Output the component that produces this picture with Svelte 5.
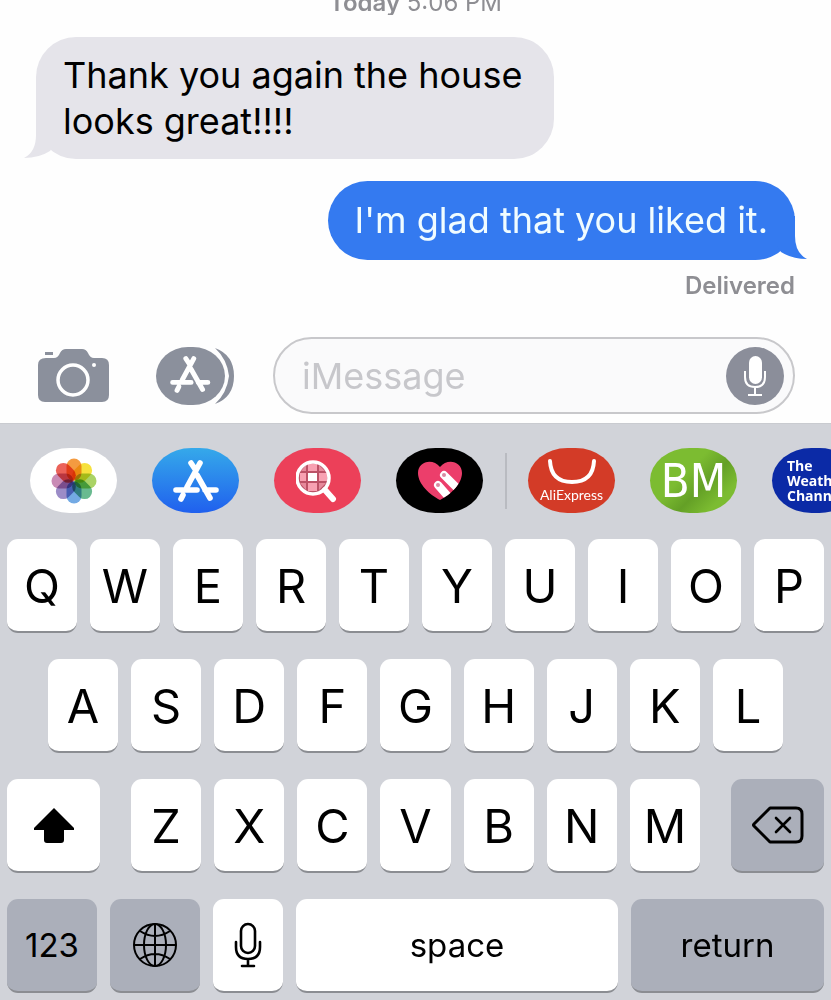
<script>
  const topRow = 'QWERTYUIOP'.split('');
  const middleRow = 'ASDFGHJKL'.split('');
  const bottomRow = 'ZXCVBNM'.split('');

  // Photos pinwheel, clockwise from the top
  const petals = ['#f28a1e', '#f5dc1c', '#9bcb4b', '#4fae7c', '#5a9be0', '#8a78bd', '#c077a8', '#e8463c'];

  const heart = 'M24 40C14 35 2 24 2 13C2 1 17-2 24 7C31-2 46 1 46 13C46 24 34 35 24 40Z';

  let draft = $state('');
</script>

{#snippet storeGlyph()}
  <g fill="none" stroke="#fff" stroke-linecap="round" stroke-width="5.6">
    <path d="M18 3 22 9M27 3 14 27M24 15 37 38M3 30H24M32 30H43M10 35 8 39" />
  </g>
{/snippet}

{#snippet key(letter)}
  <button class="key">{letter}</button>
{/snippet}

<main class="messages">
  <section class="thread">
    <div class="stamp"><span><b>Today</b> 5:06 PM</span></div>

    <p class="bubble received">
      Thank you again the house looks great!!!!
      <svg class="tail" viewBox="0 0 30 44" aria-hidden="true">
        <path d="M12 0V20Q12 37 0 43Q15 43 26 36L30 30V0Z" fill="#e5e4ea" />
      </svg>
    </p>

    <p class="bubble sent">
      <span>I'm glad that you liked it.</span>
      <svg class="tail" viewBox="0 0 30 44" aria-hidden="true">
        <path d="M18 0V20Q18 37 30 43Q15 43 4 36L0 30V0Z" fill="#347af0" />
      </svg>
    </p>
    <div class="status">Delivered</div>
  </section>

  <form class="compose" onsubmit={(e) => e.preventDefault()}>
    <button class="tool camera" type="button" aria-label="Camera">
      <svg width="72" height="56" viewBox="0 0 72 56">
        <path d="M8 10H16Q20 10 22 5Q24 1 28 1H44Q48 1 50 5Q52 10 56 10H64Q71 10 71 17V47Q71 54 64 54H7Q0 54 0 47V17Q0 10 8 10Z" fill="#8b909c" />
        <rect x="7" y="4" width="8" height="3" fill="#8b909c" />
        <circle cx="35" cy="32" r="15" fill="none" stroke="#fff" stroke-width="3.5" />
        <circle cx="56" cy="17" r="2" fill="#fff" />
      </svg>
    </button>
    <button class="tool store" type="button" aria-label="Apps">
      <svg width="78" height="58" viewBox="0 0 78 58">
        <path d="M59 1Q78 8 78 29T59 57Q71 46 73 29Q71 12 59 1Z" fill="#8b909c" />
        <rect width="69" height="58" rx="32" ry="29" fill="#8b909c" />
        <g transform="translate(14 9) scale(.88)">{@render storeGlyph()}</g>
      </svg>
    </button>
    <div class="field">
      <input type="text" placeholder="iMessage" aria-label="iMessage" bind:value={draft} />
      <button class="mic" type="button" aria-label="Record audio">
        <svg width="58" height="58" viewBox="0 0 58 58">
          <circle cx="29" cy="29" r="29" fill="#8b8e9a" />
          <rect x="23" y="9" width="13" height="28" rx="6.5" fill="#fff" />
          <path d="M19 24V30Q19 40 29 40T39 30V24M29 40V48M22 48H36" fill="none" stroke="#fff" stroke-width="2" />
        </svg>
      </button>
    </div>
  </form>

  <section class="keyboard">
    <nav class="apps" aria-label="iMessage apps">
      <button class="app photos" aria-label="Photos">
        <svg width="46" height="46" viewBox="-23 -23 46 46">
          {#each petals as color, i}
            <rect class="petal" x="-7.5" y="-22.5" width="15" height="22" rx="7.5" fill={color} transform="rotate({i * 45})" />
          {/each}
        </svg>
      </button>
      <button class="app appstore" aria-label="App Store">
        <svg width="46" height="42" viewBox="0 0 46 42">{@render storeGlyph()}</svg>
      </button>
      <button class="app images" aria-label="#images">
        <svg width="44" height="44" viewBox="2 0 44 44">
          <circle cx="19" cy="19" r="16" fill="#bc5267" />
          <g fill="#f8a1b2">
            <path d="M14 5H23V12H14ZM6 14H12V22H6ZM25 14H33V22H25ZM14 24H23V32H14Z" />
            <path d="M14 14H23V22H14Z" fill="#fff" />
            <path d="M7 12 12 6V12ZM25 6 31 12H25ZM6 24H12V31ZM25 24H32L25 31Z" opacity=".7" />
          </g>
          <circle cx="19" cy="19" r="16" fill="none" stroke="#fff" stroke-width="3.5" />
          <path d="M31 31 39 40" stroke="#fff" stroke-width="6" stroke-linecap="round" />
        </svg>
      </button>
      <button class="app touch" aria-label="Digital Touch">
        <svg width="48" height="42" viewBox="0 0 48 42">
          <clipPath id="heart"><path d={heart} /></clipPath>
          <path d={heart} fill="#ec3e6b" />
          <g clip-path="url(#heart)" stroke="#fff" stroke-width="8" stroke-linecap="round">
            <path d="M22 25 36 41M28 15 46 33" />
          </g>
          <circle cx="22" cy="25" r="2" fill="#d98ba2" />
          <circle cx="28" cy="15" r="2" fill="#d98ba2" />
        </svg>
      </button>
      <span class="divider"></span>
      <button class="app ali">
        <svg width="50" height="28" viewBox="0 0 50 28" aria-hidden="true">
          <path d="M3 3Q4 24 25 24T47 3" fill="none" stroke="#fff" stroke-width="4" stroke-linecap="round" />
        </svg>
        <span>AliExpress</span>
      </button>
      <button class="app bm">BM</button>
      <button class="app weather">The<br />Weather<br />Channel</button>
    </nav>

    <div class="row">
      {#each topRow as letter}{@render key(letter)}{/each}
    </div>
    <div class="row inset">
      {#each middleRow as letter}{@render key(letter)}{/each}
    </div>
    <div class="row spread">
      <button class="key shift" aria-label="Shift">
        <svg width="42" height="36" viewBox="0 0 42 36">
          <path d="M21 1 41 21V23H31V33Q31 36 28 36H14Q11 36 11 33V23H1V21Z" />
        </svg>
      </button>
      <div class="letters">
        {#each bottomRow as letter}{@render key(letter)}{/each}
      </div>
      <button class="key dark shift" aria-label="Delete">
        <svg width="52" height="38" viewBox="0 0 52 38" fill="none" stroke="#000" stroke-linejoin="round" stroke-linecap="round">
          <path d="M18 2H44Q50 2 50 8V30Q50 36 44 36H18L2 20Q1 19 2 18Z" stroke-width="3" />
          <path d="M24 12 38 26M38 12 24 26" stroke-width="2.6" />
        </svg>
      </button>
    </div>
    <div class="row">
      <button class="key dark word mode">123</button>
      <button class="key dark mode" aria-label="Next keyboard">
        <svg width="46" height="46" viewBox="0 0 46 46" fill="none" stroke="#000" stroke-width="2">
          <circle cx="23" cy="23" r="21" />
          <ellipse cx="23" cy="23" rx="11" ry="21" />
          <path d="M2 23H44M23 2V44M8 9Q23 19 38 9M8 37Q23 27 38 37" />
        </svg>
      </button>
      <button class="key dictate" aria-label="Dictate">
        <svg width="28" height="46" viewBox="0 0 28 46" fill="none" stroke="#000" stroke-width="2.6" stroke-linecap="round">
          <rect x="7" y="2" width="14" height="29" rx="7" />
          <path d="M2 20V25Q2 37 14 37T26 25V20M14 37V44M8 44H20" />
        </svg>
      </button>
      <button class="key word space">space</button>
      <button class="key dark word return">return</button>
    </div>
  </section>
</main>

<style>
  :global(body) { margin: 0; background: #fefefe; }

  .messages {
    font-family: Inter, 'Liberation Sans', sans-serif;
    color: #000;
    overflow: hidden;
  }
  button, input { font: inherit; color: inherit; border: none; padding: 0; background: none; }
  button { cursor: pointer; }
  svg { display: block; flex: none; }

  .thread {
    display: flex;
    flex-direction: column;
    align-items: flex-start;
    padding: 0 36px;
  }
  .stamp {
    align-self: center;
    display: flex;
    align-items: flex-end;
    height: 15px;
    margin-bottom: 22px;
    overflow: hidden;
    font-size: 24px;
    line-height: 24px;
    color: #8e8e93;
  }
  .stamp b { font-weight: 600; }

  .bubble {
    position: relative;
    box-sizing: border-box;
    max-width: 518px;
    margin: 0 0 22px;
    padding: 15px 27px;
    border-radius: 40px;
    font-size: 36px;
    line-height: 46px;
  }
  .received { background: #e5e4ea; }
  .sent {
    align-self: flex-end;
    margin-bottom: 12px;
    background: #347af0;
    color: #f0fcff;
    line-height: 49px;
  }
  .tail { position: absolute; bottom: 0; width: 30px; height: 44px; }
  .received .tail { left: -12px; }
  .sent .tail { right: -12px; }
  .sent span { position: relative; z-index: 1; }

  .status {
    align-self: flex-end;
    font-size: 24px;
    line-height: 28px;
    font-weight: 600;
    color: #8e8e93;
  }

  .compose {
    display: flex;
    align-items: center;
    padding: 37px 36px 9px;
  }
  .camera { margin: 0 46px 0 2px; }
  .store { margin-right: 39px; }
  .field {
    display: flex;
    align-items: center;
    flex: 1;
    min-width: 0;
    box-sizing: border-box;
    height: 77px;
    padding: 0 9px 0 27px;
    border: 2px solid #c8c8cb;
    border-radius: 40px;
    background: #fafafb;
  }
  .field input {
    flex: 1;
    min-width: 0;
    font-size: 36px;
    outline: none;
  }
  .field input::placeholder { color: #c7c7cb; opacity: 1; }

  .keyboard {
    padding: 0 7px 7px;
    border-top: 1px solid #c9cbd0;
    background: #d1d3d9;
  }
  .apps {
    display: flex;
    align-items: center;
    gap: 35px;
    margin: 0 -7px;
    padding: 24px 0 26px 30px;
    overflow: hidden;
  }
  .app {
    display: flex;
    flex: none;
    flex-direction: column;
    align-items: center;
    justify-content: center;
    width: 87px;
    height: 65px;
    border-radius: 40px / 33px;
    color: #fff;
  }
  .photos { background: #fff; }
  .petal { mix-blend-mode: multiply; opacity: 0.85; }
  .appstore { background: linear-gradient(#35a9ea, #2060ee); }
  .images { background: #ec4059; }
  .touch { background: #000; }
  .divider { flex: none; width: 2px; height: 56px; margin: 0 -14px 0 -13px; background: #b9bbc1; }
  .ali { background: #d33b27; font-size: 14px; line-height: 18px; font-family: Lato, sans-serif; }
  .bm {
    background: linear-gradient(135deg, #7cbc31 40%, #64a026 60%, #7cbc31 80%);
    font: 47px/56px 'DejaVu Sans Condensed', 'DejaVu Sans', sans-serif;
  }
  .weather {
    display: block;
    padding-left: 15px;
    background: #0b2aa6;
    font: 700 14px/15px 'Open Sans', sans-serif;
    text-align: left;
  }

  .row { display: flex; gap: 13px; margin-bottom: 26px; }
  .row:last-child { margin-bottom: 0; }
  .inset { padding: 0 41px; }
  .spread { gap: 31px; }
  .letters { display: flex; flex: 1; gap: 13px; }
  .key {
    display: flex;
    flex: 1 1 0;
    align-items: center;
    justify-content: center;
    box-sizing: border-box;
    min-width: 0;
    height: 94px;
    border-bottom: 2px solid #8b8d92;
    border-radius: 11px;
    background: #fff;
    font-size: 47px;
  }
  .dark { background: #abafba; }
  .word { font-size: 33px; }
  .shift { flex: none; width: 93px; }
  .mode { flex: 0 0 90px; }
  .dictate { flex: 0 0 70px; }
  .return { flex: 0 0 193px; }
</style>
